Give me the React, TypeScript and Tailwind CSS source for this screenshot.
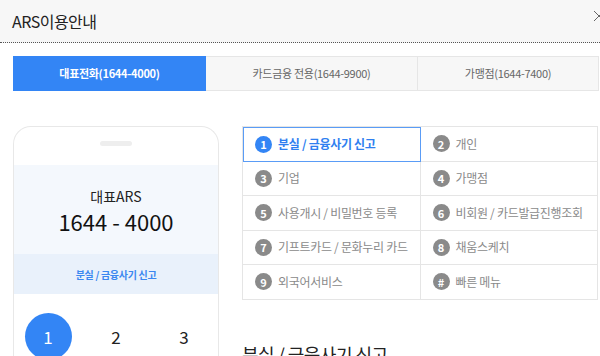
const tabs = [
  { label: '대표전화(1644-4000)', w: 'w-[193px]' },
  { label: '카드금융 전용(1644-9900)', w: 'w-[212px]' },
  { label: '가맹점(1644-7400)', w: 'w-[181px]' },
];

const menus = [
  { no: '1', label: '분실 / 금융사기 신고' },
  { no: '2', label: '개인' },
  { no: '3', label: '기업' },
  { no: '4', label: '가맹점' },
  { no: '5', label: '사용개시 / 비밀번호 등록' },
  { no: '6', label: '비회원 / 카드발급진행조회' },
  { no: '7', label: '기프트카드 / 문화누리 카드' },
  { no: '8', label: '채움스케치' },
  { no: '9', label: '외국어서비스' },
  { no: '#', label: '빠른 메뉴' },
];

export default function App() {
  return (
    <div className="h-[356px] w-[600px] overflow-hidden bg-white font-['Noto_Sans_CJK_KR','Noto_Sans',sans-serif]">
      {/* 헤더 */}
      <div className="relative flex h-[43px] items-center border-b border-dotted border-[#555] bg-[#f7f7f7] pl-3">
        <h1 className="text-[16px] leading-none tracking-[-0.5px] text-[#222]">ARS이용안내</h1>
        <svg className="absolute right-[-5px] top-[10px]" width="12" height="12" viewBox="0 0 12 12">
          <path d="M1 1 L11 11 M11 1 L1 11" stroke="#666" strokeWidth="1" fill="none" />
        </svg>
      </div>

      {/* 탭 */}
      <div className="mt-[13px] flex pl-[13px]">
        {tabs.map((t, i) => (
          <div
            key={t.label}
            className={
              i === 0
                ? `flex h-[35px] ${t.w} shrink-0 items-center justify-center bg-[#3385f5] text-[11px] font-bold tracking-[-0.3px] text-white`
                : `flex h-[35px] ${t.w} shrink-0 items-center justify-center border border-l-0 border-[#e6e6e6] bg-[#f7f7f7] text-[11px] tracking-[-0.3px] text-[#666]`
            }
          >
            {t.label}
          </div>
        ))}
      </div>

      <div className="mt-[35px] flex pl-[13px]">
        {/* 폰 목업 */}
        <div className="h-[240px] w-[206px] shrink-0 rounded-t-[18px] border border-b-0 border-[#e8e8e8]">
          <div className="flex h-[38px] justify-center pt-[14px]">
            <div className="h-[5px] w-[32px] rounded-full bg-[#eeeeee]" />
          </div>
          <div className="flex h-[89px] flex-col items-center justify-center bg-[#f4f8fd] pt-[2px]">
            <p className="text-[14px] leading-[20px] text-[#222]">대표ARS</p>
            <p className="mt-[1px] text-[22px] leading-[28px] text-[#111]">1644 - 4000</p>
          </div>
          <div className="flex h-[40px] items-center justify-center bg-[#e9f1fb]">
            <p className="text-[10px] font-bold tracking-[-0.3px] text-[#3b87f0]">분실 / 금융사기 신고</p>
          </div>
          <div className="grid grid-cols-3 pt-[19px]">
            {['1', '2', '3'].map((n) => (
              <div key={n} className="flex justify-center">
                <div
                  className={
                    n === '1'
                      ? 'flex h-[47px] w-[47px] items-center justify-center rounded-full bg-[#3385f5] text-[17px] text-white'
                      : 'flex h-[47px] w-[47px] items-center justify-center text-[17px] text-[#222]'
                  }
                >
                  {n}
                </div>
              </div>
            ))}
          </div>
        </div>

        {/* 메뉴 목록 */}
        <div className="ml-[23px] w-[356px]">
          <div className="grid grid-cols-2 border-l border-t border-[#e5e5e5]">
            {menus.map((m, i) => (
              <div
                key={m.no}
                className={
                  i === 0
                    ? 'flex h-[34.5px] items-center gap-[6px] border border-[#5a9cf6] pl-[11px]'
                    : 'flex h-[34.5px] items-center gap-[6px] border-b border-r border-[#e5e5e5] pl-[12px]'
                }
              >
                <span
                  className={
                    i === 0
                      ? 'flex h-[17px] w-[17px] items-center justify-center rounded-full bg-[#3385f5] text-[11px] font-bold text-white'
                      : 'flex h-[17px] w-[17px] items-center justify-center rounded-full bg-[#8a8a8a] text-[11px] font-bold text-white'
                  }
                >
                  {m.no}
                </span>
                <span
                  className={
                    i === 0
                      ? 'text-[12px] font-bold tracking-[-0.3px] text-[#2f7ff0]'
                      : 'text-[12px] tracking-[-0.3px] text-[#8a8a8a]'
                  }
                >
                  {m.label}
                </span>
              </div>
            ))}
          </div>
          <h2 className="mt-[42px] text-[18px] leading-[24px] tracking-[-0.5px] text-[#222]">분실 / 금융사기 신고</h2>
        </div>
      </div>
    </div>
  );
}
